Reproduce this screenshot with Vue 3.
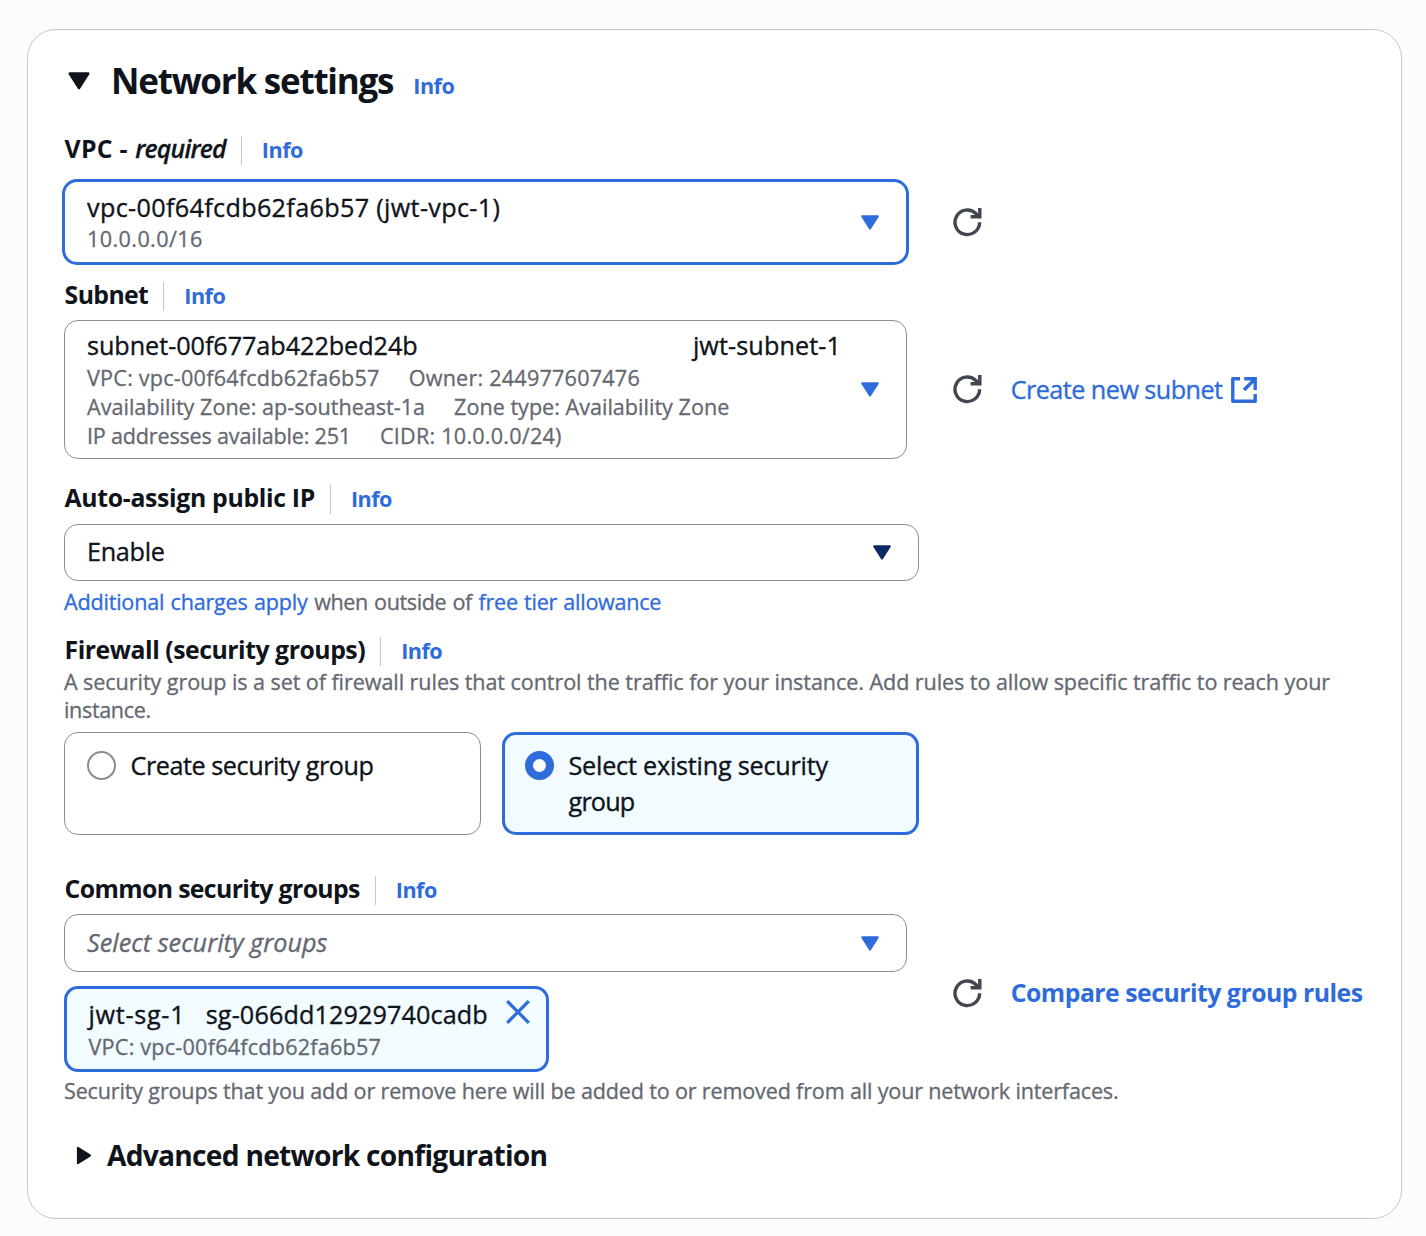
<script setup>
import { h } from 'vue'

const Caret = () =>
  h('svg', { viewBox: '0 0 18 15', 'aria-hidden': 'true' }, [
    h('path', {
      d: 'M1.2 .3h15.6a1 1 0 0 1 .8 1.6L9.9 14a1.1 1.1 0 0 1-1.8 0L.4 1.9A1 1 0 0 1 1.2 .3z',
      fill: 'currentColor',
    }),
  ])

const Refresh = () =>
  h('svg', { viewBox: '0 0 29 29', 'aria-hidden': 'true', fill: 'none', stroke: 'currentColor', 'stroke-width': '3.4' }, [
    h('path', { d: 'M26.6 14.3A12.3 12.3 0 1 1 22.8 5.4L26 8.8' }),
    h('path', { d: 'M26.8 0V8.8H17.6' }),
  ])
</script>

<template>
  <main class="page">
    <section class="card">
      <header class="card-head">
        <Caret class="head-caret" />
        <h2>Network settings</h2>
        <a class="info">Info</a>
      </header>

      <div class="label vpc-label">
        <span class="vpc-name">VPC - </span><em>required</em><i class="divider"></i><a class="info">Info</a>
      </div>
      <div class="row">
        <div class="select focused">
          <div class="value">
            <div class="main t-vpc">vpc-00f64fcdb62fa6b57 (jwt-vpc-1)</div>
            <div class="sub t-cidr">10.0.0.0/16</div>
          </div>
          <Caret class="caret" />
        </div>
        <Refresh class="refresh" />
      </div>

      <div class="label subnet-label">
        <span class="t-subnet">Subnet</span><i class="divider"></i><a class="info">Info</a>
      </div>
      <div class="row">
        <div class="select subnet">
          <div class="value">
            <div class="main pair"><span class="t-subnet-id">subnet-00f677ab422bed24b</span><span class="t-name">jwt-subnet-1</span></div>
            <div class="sub"><span class="t-id">VPC: vpc-00f64fcdb62fa6b57</span><span class="t-id">Owner: 244977607476</span></div>
            <div class="sub"><span>Availability Zone: ap-southeast-1a</span><span>Zone type: Availability Zone</span></div>
            <div class="sub"><span class="t-ip">IP addresses available: 251</span><span class="t-id">CIDR: 10.0.0.0/24)</span></div>
          </div>
          <Caret class="caret" />
        </div>
        <Refresh class="refresh" />
        <a class="link">Create new subnet</a>
        <svg class="external" viewBox="0 0 26 26" fill="none" stroke="currentColor" stroke-width="3.4">
          <path d="M9 1.8H1.8V24.2H24.2V17" stroke-linejoin="round" />
          <path d="M13.2 1.8H24.2V13M23.6 2.4 13 13" />
        </svg>
      </div>

      <div class="label auto-label">
        <span class="t-auto">Auto-assign public IP</span><i class="divider"></i><a class="info">Info</a>
      </div>
      <div class="select wide">
        <div class="main t-enable">Enable</div>
        <Caret class="caret navy" />
      </div>
      <p class="help charges">
        <a class="t-charges">Additional charges apply</a> <span class="t-when">when outside of</span> <a class="t-free">free tier allowance</a>
      </p>

      <div class="label firewall-label">
        <span class="t-firewall">Firewall (security groups)</span><i class="divider"></i><a class="info">Info</a>
      </div>
      <p class="help description">
        A security group is a set of firewall rules that control the traffic for your instance. Add rules to allow specific traffic to reach your <span class="t-instance">instance.</span>
      </p>
      <div class="tiles">
        <label class="tile">
          <span class="radio"></span><span class="t-create">Create security group</span>
        </label>
        <label class="tile selected">
          <span class="radio on"></span><span class="t-select">Select existing security <span class="t-group">group</span></span>
        </label>
      </div>

      <div class="label common-label">
        <span class="t-common">Common security groups</span><i class="divider"></i><a class="info">Info</a>
      </div>
      <div class="row">
        <div class="stack">
          <div class="select groups">
            <div class="main placeholder">Select security groups</div>
            <Caret class="caret" />
          </div>
          <div class="token">
            <div>
              <div class="main token-main"><span class="t-sg">jwt-sg-1</span><span class="t-sgid">sg-066dd12929740cadb</span></div>
              <div class="sub t-id">VPC: vpc-00f64fcdb62fa6b57</div>
            </div>
            <svg class="close" viewBox="0 0 24 24" fill="none" stroke="currentColor" stroke-width="3.2">
              <path d="M1.2 1.2 22.8 22.8M22.8 1.2 1.2 22.8" />
            </svg>
          </div>
        </div>
        <Refresh class="refresh" />
        <a class="link compare">Compare security group rules</a>
      </div>
      <p class="help note">Security groups that you add or remove here will be added to or removed from all your network interfaces.</p>

      <div class="advanced">
        <span class="adv-box"><Caret class="adv-caret" /></span>
        <h3>Advanced network configuration</h3>
      </div>
    </section>
  </main>
</template>

<style>
body { background: #fcfcfc; }
</style>

<style scoped>
* { box-sizing: border-box; }
.page {
  padding: 29px 24px 17px 27px;
  height: 1236px;
  font-family: "Open Sans", "Noto Sans", sans-serif;
  color: #0f141a;
  white-space: nowrap;
}
.card {
  height: 1190px;
  border: 1px solid #c6c6cd;
  border-radius: 29px;
  background: #fff;
  padding: 30px 36px 0;
}
h2, h3, p { margin: 0; }
svg { display: block; flex: none; }
a { color: #2e6bdb; }

.card-head { display: flex; align-items: baseline; height: 41px; }
.head-caret { width: 22px; height: 18px; margin: 12px 21px 0 4px; align-self: flex-start; }
h2 { font-size: 35px; line-height: 42px; font-weight: 700; letter-spacing: -1.23px; margin-right: 20px; }
.info { font-size: 21.6px; font-weight: 700; letter-spacing: -.5px; }

.label {
  display: flex;
  height: 29px;
  line-height: 29px;
  font-size: 24.8px;
  font-weight: 700;
  align-items: baseline;
  padding-left: .6px;
}
.label em { font-weight: 600; letter-spacing: -.8px; margin-left: .8px; -webkit-text-stroke: .3px currentColor; }
.vpc-name { white-space: pre; letter-spacing: .25px; }
.divider { width: 1px; height: 29px; background: #c6c6cd; margin: 2px 20px 0 15px; align-self: flex-start; }
.vpc-label { margin: 33px 0 16px; }
.subnet-label { margin: 15px 0 11px; }
.auto-label { margin: 24px 0 12px; }
.firewall-label { margin: 19px 0 3px; }
.common-label { margin: 39px 0 11px; }

.row { display: flex; align-items: center; }
.select {
  display: flex;
  align-items: center;
  justify-content: space-between;
  width: 843px;
  border: 1px solid #8c8c94;
  border-radius: 14px;
  padding: 0 27px 0 22px;
  background: #fff;
}
.focused { width: 847px; height: 86px; border: 3px solid #2e6bdb; margin: 0 -2px; border-radius: 15px; }
.subnet { height: 139px; }
.wide { width: 855px; height: 57px; }
.groups { height: 58px; }
.main, .tile, .link:not(.compare) { -webkit-text-stroke: .35px currentColor; }
.sub, .help { -webkit-text-stroke: .3px currentColor; }
.main { font-size: 25.2px; line-height: 34px; }
.sub { font-size: 21.6px; line-height: 29px; color: #656871; display: flex; gap: 29px; }
.pair { display: flex; justify-content: space-between; width: 754px; margin-bottom: 1px; }
.focused .main { line-height: 32px; margin-bottom: 1px; }
.subnet .value { margin-top: -1px; }
.caret { width: 18px; height: 15px; color: #2e6bdb; }
.navy { color: #0b2a63; }
.t-enable { letter-spacing: -.3px; margin-top: -3px; }
.placeholder { font-style: italic; color: #656871; margin-top: -2px; letter-spacing: .04px; }
.refresh { width: 29px; height: 29px; margin-left: 46px; color: #424650; }
.link { font-size: 25.2px; line-height: 36px; letter-spacing: -.54px; margin-left: 28.7px; margin-top: -1px; }
.external { width: 26px; height: 26px; margin-left: 8.3px; color: #2e6bdb; }
.compare { font-size: 24.8px; font-weight: 700; letter-spacing: -.5px; margin-top: -2px; }

.help { font-size: 21.6px; line-height: 28px; color: #656871; }
.charges { line-height: 29px; margin-top: 6px; word-spacing: 1px; }
.description { position: relative; top: 1px; white-space: normal; width: 1280px; letter-spacing: -.082px; }

.tiles { display: flex; gap: 21px; margin-top: 9px; }
.tile {
  display: flex;
  width: 417px;
  height: 103px;
  border: 1px solid #8c8c94;
  border-radius: 14px;
  padding: 14px 22px 0;
  font-size: 25.2px;
  line-height: 36px;
  white-space: normal;
}
.selected { border: 3px solid #2e6bdb; background: #f2fbff; padding: 12px 20px 0; }
.radio { width: 29px; height: 29px; flex: none; border: 2px solid #8c8c94; border-radius: 50%; margin: 4px 14.5px 0 0; background: #fff; }
.radio.on { border: 8.5px solid #2e6bdb; }

.token {
  display: flex;
  width: 485px;
  height: 86px;
  margin-top: 14px;
  border: 3px solid #2e6bdb;
  border-radius: 14px;
  background: #f2fbff;
  padding: 8px 16px 0 21.5px;
  justify-content: space-between;
}
.token-main { display: flex; gap: 20.5px; margin-bottom: 1px; }
.close { width: 24px; height: 24px; margin-top: 3px; color: #2e6bdb; }
.note { margin-top: 5px; letter-spacing: -.179px; }

.advanced { display: flex; align-items: center; margin-top: 32px; padding-left: 12px; height: 36px; }
.adv-box { display: flex; width: 15px; height: 18px; align-items: center; justify-content: center; margin-right: 16px; }
.adv-caret { width: 18px; height: 15px; transform: rotate(-90deg); }
h3 { font-size: 28.2px; line-height: 36px; font-weight: 700; letter-spacing: -.75px; }

.t-vpc { letter-spacing: .33px; }
.t-cidr { letter-spacing: .398px; }
.t-subnet { letter-spacing: -.62px; }
.t-subnet-id { letter-spacing: -.05px; }
.t-name { letter-spacing: .1px; }
.t-id { letter-spacing: .22px; }
.t-ip { letter-spacing: -.2px; }
.t-auto { letter-spacing: -.33px; }
.t-charges { letter-spacing: -.22px; }
.t-when { letter-spacing: -.4px; }
.t-free { letter-spacing: -.29px; }
.t-instance { letter-spacing: -.362px; }
.t-firewall { letter-spacing: -.47px; }
.t-create { letter-spacing: -.449px; }
.t-select { letter-spacing: -.218px; }
.t-group { letter-spacing: -.8px; }
.t-common { letter-spacing: -.63px; }
.t-sg { letter-spacing: .7px; }
.t-sgid { letter-spacing: .11px; }
</style>
